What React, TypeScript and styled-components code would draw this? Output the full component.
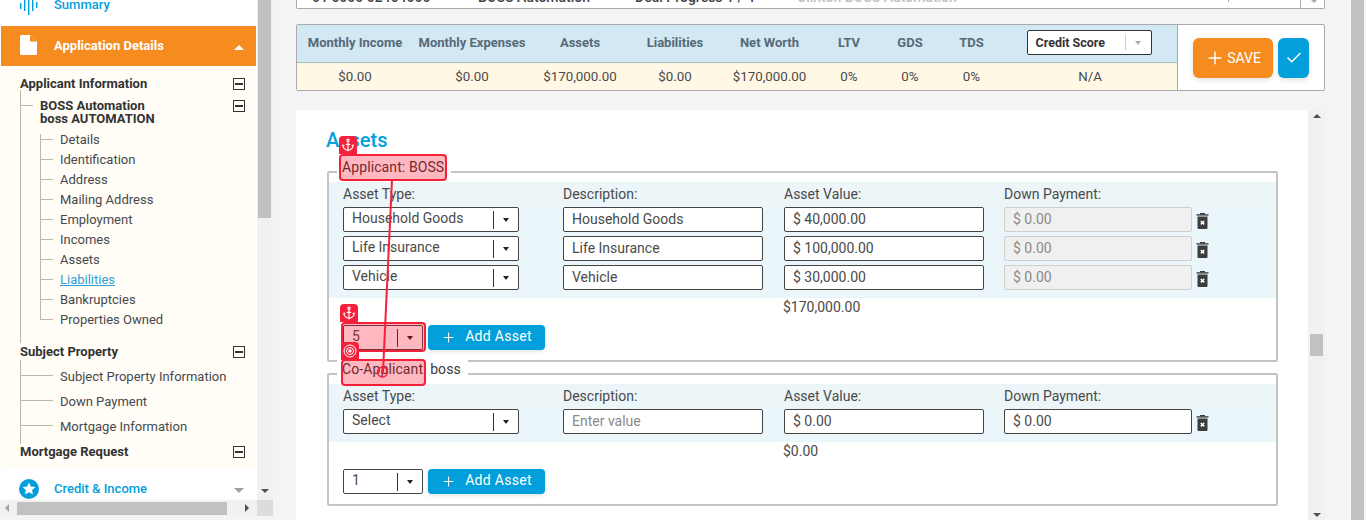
import React from 'react'
import styled, { createGlobalStyle } from 'styled-components'
import { Anchor, Check, Plus } from 'lucide-react'

const BLUE = '#029fdb'
const ORANGE = '#f68c1f'
const RED = '#f5213a'
const TEXT = '#3f3f3f'

const Global = createGlobalStyle`
  html, body { margin: 0; padding: 0; background: #f4f4f4; }
  body { font-family: Roboto, "Liberation Sans", sans-serif; color: ${TEXT}; }
  * { box-sizing: border-box; }
`

const Page = styled.div`
  position: relative;
  display: flex;
  width: 1366px;
  height: 520px;
  overflow: hidden;
  background: #f4f4f4;
`

/* ---------- sidebar ---------- */

const Side = styled.aside`
  width: 273px;
  flex: none;
  height: 516px;
  display: grid;
  grid-template-columns: 257px 16px;
  grid-template-rows: 500px 16px;
`

const SideBody = styled.div`
  background: #fff;
  padding-left: 1px;
  overflow: hidden;
`

const NavRow = styled.div<{ $active?: boolean }>`
  height: ${(p) => (p.$active ? 40 : 31)}px;
  width: 255px;
  display: flex;
  align-items: center;
  padding: ${(p) => (p.$active ? '0 0 2px 19px' : '7px 0 0 19px')};
  color: ${(p) => (p.$active ? '#fff' : BLUE)};
  background: ${(p) => (p.$active ? ORANGE : '#fff')};
  font-size: 13px;
  font-weight: ${(p) => (p.$active ? 700 : 500)};
`

const NavTop = styled(NavRow)`
  height: 25px;
  align-items: flex-start;
  padding: 0 0 0 19px;
  margin-bottom: 1px;
`

const NavIcon = styled.span`
  width: 34px;
  flex: none;
  display: flex;
  align-items: center;
`

const CreditIcon = styled(NavIcon)`
  width: 35px;
  margin-left: -1px;
  padding-top: 2px;
`

const NavLabel = styled.span`
  flex: 1;
`

const SummaryLabel = styled(NavLabel)`
  margin-top: -3px;
  line-height: 15px;
`

const Caret = styled.span<{ $up?: boolean; $color: string }>`
  width: 0;
  height: 0;
  margin: 5px 12px 0 0;
  border-left: 5px solid transparent;
  border-right: 5px solid transparent;
  border-${(p) => (p.$up ? 'bottom' : 'top')}: 5px solid ${(p) => p.$color};
`

const Tree = styled.div`
  position: relative;
  width: 255px;
  height: 402px;
  margin-top: 1px;
  background: #fffdf6;
`

const TreeText = styled.div<{ $x: number; $y: number; $bold?: boolean; $link?: boolean }>`
  position: absolute;
  left: ${(p) => p.$x}px;
  top: ${(p) => p.$y}px;
  font-size: 13px;
  line-height: 13px;
  white-space: nowrap;
  font-weight: ${(p) => (p.$bold ? 700 : 400)};
  color: ${(p) => (p.$link ? '#2f9fd8' : p.$bold ? '#333' : '#47494d')};
  text-decoration: ${(p) => (p.$link ? 'underline' : 'none')};
`

const TreeLine = styled.div<{ $x: number; $y: number; $w?: number; $h?: number }>`
  position: absolute;
  left: ${(p) => p.$x}px;
  top: ${(p) => p.$y}px;
  width: ${(p) => p.$w ?? 1}px;
  height: ${(p) => p.$h ?? 1}px;
  background: #bdb6a6;
`

const Minus = styled.div<{ $y: number }>`
  position: absolute;
  left: 232px;
  top: ${(p) => p.$y}px;
  width: 12px;
  height: 12px;
  border: 1px solid #333;
  &::after {
    content: '';
    position: absolute;
    left: 1px;
    right: 1px;
    top: 4px;
    height: 2px;
    background: #333;
  }
`

const VBar = styled.div`
  display: flex;
  flex-direction: column;
  background: #f1f1f1;
  padding: 0 2px 0 1px;
  align-items: center;
`

const VThumb = styled.div<{ $h: number }>`
  width: 13px;
  height: ${(p) => p.$h}px;
  flex: none;
  background: #c1c1c1;
`

const Spacer = styled.div`
  flex: 1;
`

const ArrowDown = styled.span`
  width: 0;
  height: 0;
  margin-bottom: 7px;
  border-left: 4px solid transparent;
  border-right: 4px solid transparent;
  border-top: 4px solid #505050;
`

const ArrowUp = styled.span`
  width: 0;
  height: 0;
  margin-top: 4px;
  border-left: 4px solid transparent;
  border-right: 4px solid transparent;
  border-bottom: 4px solid #505050;
`

const HBar = styled.div`
  display: flex;
  align-items: center;
  background: #f1f1f1;
  margin-left: 1px;
  height: 16px;
`

const HThumb = styled.div`
  width: 210px;
  height: 13px;
  background: #c1c1c1;
  margin-right: 4px;
`

const ArrowSide = styled.span<{ $right?: boolean; $dim?: boolean }>`
  width: 0;
  height: 0;
  margin: 0 ${(p) => (p.$right ? 0 : 8)}px 0 ${(p) => (p.$right ? 14 : 4)}px;
  border-top: 4px solid transparent;
  border-bottom: 4px solid transparent;
  border-${(p) => (p.$right ? 'left' : 'right')}: 4px solid ${(p) => (p.$dim ? '#a3a3a3' : '#505050')};
`

const Corner = styled.div`
  background: #dcdcdc;
`

/* ---------- main column ---------- */

const Main = styled.main`
  flex: none;
  width: 1029px;
  margin-left: 23px;
  display: flex;
  flex-direction: column;
`

const PageBar = styled.div`
  flex: none;
  width: 13px;
  margin-left: 26px;
  background: #c1c1c1;
`

const TopCard = styled.div`
  height: 9px;
  background: #fff;
  border: 1px solid #aaa;
  border-top: none;
  border-radius: 0 0 2px 2px;
  overflow: hidden;
`

const TopRow = styled.div`
  display: grid;
  grid-template-columns: 166px 157px 162px 431px 72px 1fr;
  height: 8px;
  padding-left: 15px;
`

const TopText = styled.div<{ $muted?: boolean }>`
  margin-top: -11px;
  font-size: 14px;
  line-height: 16px;
  font-weight: 500;
  white-space: nowrap;
  color: ${(p) => (p.$muted ? '#c0c0c0' : '#444')};
`

const TopTick = styled.div`
  border-left: 1px solid #aaa;
  height: 2px;
`

const TopDivider = styled.div`
  border-left: 1px solid #aaa;
  display: flex;
  padding-left: 10px;
  &::after {
    content: '';
    height: 0;
    border-left: 3px solid transparent;
    border-right: 3px solid transparent;
    border-top: 3px solid #aaa;
  }
`

const Summary = styled.section`
  margin-top: 15px;
  height: 67px;
  display: flex;
  border: 1px solid #aaa;
  border-radius: 2px;
  background: #fff;
`

const Figures = styled.div`
  width: 881px;
  flex: none;
  display: grid;
  grid-template-columns: 116px 118px 98px 92px 97px 62px 60px 63px 174px;
  grid-template-rows: 38px 27px;
  border-right: 1px solid #aaa;
`

const HeadCell = styled.div`
  background: #d2e8f2;
  border-bottom: 1px solid #a9bcc6;
  padding-bottom: 2px;
  display: flex;
  align-items: center;
  justify-content: center;
  font-size: 13px;
  font-weight: 700;
  color: #566a7a;
  white-space: nowrap;
`

const ValueCell = styled.div`
  background: #fff8e5;
  display: flex;
  align-items: center;
  justify-content: center;
  font-size: 13.33px;
  color: #4a4a4a;
`

const ScoreSelect = styled.div`
  width: 125px;
  height: 25px;
  margin-right: 2px;
  background: #fff;
  border: 1px solid #333;
  border-radius: 2px;
  display: flex;
  align-items: center;
  padding-left: 8px;
  font-size: 12.5px;
  font-weight: 700;
  color: #333;
`

const ScoreArrow = styled.span`
  margin-left: auto;
  width: 26px;
  height: 15px;
  border-left: 1px solid #ccc;
  display: flex;
  align-items: center;
  justify-content: center;
  &::after {
    content: '';
    border-left: 3.5px solid transparent;
    border-right: 3.5px solid transparent;
    border-top: 4px solid #aaa;
  }
`

const Actions = styled.div`
  flex: 1;
  display: flex;
  align-items: center;
  gap: 5px;
  padding-left: 15px;
`

const SaveBtn = styled.button`
  width: 80px;
  height: 40px;
  padding: 0;
  border: none;
  border-radius: 6px;
  background: ${ORANGE};
  color: #fff;
  font: 400 14px Roboto, sans-serif;
  display: flex;
  align-items: center;
  justify-content: center;
  gap: 2px;
  box-shadow: 0 2px 5px rgba(0, 0, 0, 0.12);
`

const CheckBtn = styled(SaveBtn)`
  width: 31px;
  background: ${BLUE};
`

const Content = styled.div`
  margin-top: 19px;
  display: flex;
  height: 410px;
`

const Panel = styled.div`
  width: 1012px;
  flex: none;
  background: #fff;
  border-radius: 2px 0 0 0;
  padding: 18px 31px 0;
  overflow: hidden;
`

const InnerBar = styled(VBar)`
  flex: 1;
  padding: 0 2px;
`

const InnerThumb = styled(VThumb)`
  margin-top: 216px;
`

const InnerDown = styled(ArrowDown)`
  margin-bottom: 3px;
`

const Title = styled.h2`
  margin: 0 0 0 -1px;
  height: 24px;
  font-size: 20px;
  line-height: 24px;
  font-weight: 500;
  color: ${BLUE};
`

const Field = styled.fieldset<{ $h: number }>`
  position: relative;
  width: 951px;
  height: ${(p) => p.$h}px;
  margin: 19px 0 0;
  padding: 9px 0 0;
  border: 2px solid #c4c4c4;
  border-radius: 2px;
`

const FieldSecond = styled(Field)`
  margin-top: 11px;
`

const Legend = styled.div`
  position: absolute;
  left: 8px;
  top: -15px;
  padding: 0 7px 0 5px;
  height: 18px;
  line-height: 18px;
  background: #fff;
  font-size: 14px;
  letter-spacing: 0.1px;
  color: #3a3a3a;
`

const Labels = styled.div`
  display: grid;
  grid-template-columns: 220px 221px 220px 1fr;
  height: 24px;
  padding: 3px 0 0 14px;
  background: #ecf5f8;
  font-size: 14px;
  line-height: 18px;
  color: #4a4a4a;
`

const Rows = styled.div`
  display: flex;
  flex-direction: column;
  gap: 4px;
  padding: 1px 0 8px 14px;
  background: #ebf6fb;
`

const Row = styled.div`
  display: flex;
  align-items: center;
  height: 25px;
`

const SelectBox = styled.div<{ $w: number }>`
  width: ${(p) => p.$w}px;
  height: 25px;
  flex: none;
  background: #fff;
  border: 1px solid #444;
  border-radius: 2px;
  display: flex;
  align-items: flex-start;
  padding: 2px 0 0 8px;
  font-size: 14px;
  line-height: 17px;
  color: #4a4a4a;
`

const SelectArrow = styled.span`
  margin-left: auto;
  margin-top: 1px;
  width: 25px;
  height: 18px;
  border-left: 1px solid #333;
  display: flex;
  align-items: center;
  justify-content: center;
  &::after {
    content: '';
    border-left: 3px solid transparent;
    border-right: 3px solid transparent;
    border-top: 4px solid #222;
  }
`

const Input = styled.div<{ $w: number; $off?: boolean; $hint?: boolean }>`
  width: ${(p) => p.$w}px;
  height: 25px;
  flex: none;
  margin-left: 44px;
  border: 1px solid ${(p) => (p.$off ? '#cfcfcf' : '#444')};
  background: ${(p) => (p.$off ? '#f0f0f0' : '#fff')};
  border-radius: 2px;
  padding-left: 8px;
  font-size: 14px;
  line-height: 23px;
  color: ${(p) => (p.$off || p.$hint ? '#8a8a8a' : '#4a4a4a')};
`

const AmountInput = styled(Input)`
  margin-left: 21px;
`

const DownInput = styled(Input)`
  margin-left: 20px;
`

const TrashIcon = styled.svg`
  width: 13px;
  height: 16px;
  margin: 3px 0 0 4px;
  flex: none;
`

const Total = styled.div`
  height: 18px;
  padding-left: 454px;
  font-size: 14px;
  line-height: 18px;
  color: #4a4a4a;
`

const Footer = styled.div`
  display: flex;
  gap: 5px;
  margin-top: 9px;
  padding-left: 14px;
  height: 25px;
`

const AddBtn = styled.button`
  width: 117px;
  height: 25px;
  padding: 0 0 3px;
  border: none;
  border-radius: 4px;
  background: ${BLUE};
  color: #fff;
  font: 400 14px Roboto, sans-serif;
  letter-spacing: 0.3px;
  display: flex;
  align-items: center;
  justify-content: center;
  gap: 9px;
  box-shadow: 0 1px 4px rgba(0, 0, 0, 0.15);
  svg {
    margin-top: 3px;
  }
`

/* ---------- inspector overlay drawn over the page ---------- */

const Tag = styled.div<{ $x: number; $y: number }>`
  position: absolute;
  left: ${(p) => p.$x}px;
  top: ${(p) => p.$y}px;
  width: 18px;
  height: 18px;
  background: ${RED};
  color: #fff;
  border-radius: 4px 4px 0 0;
  display: flex;
  align-items: center;
  justify-content: center;
`

const Box = styled.div<{ $x: number; $y: number; $w: number; $h: number }>`
  position: absolute;
  left: ${(p) => p.$x}px;
  top: ${(p) => p.$y}px;
  width: ${(p) => p.$w}px;
  height: ${(p) => p.$h}px;
  border: 2px solid ${RED};
  border-radius: 4px;
  background: rgba(255, 0, 24, 0.28);
`

const Wire = styled.svg`
  position: absolute;
  left: 0;
  top: 0;
  width: 1366px;
  height: 520px;
  pointer-events: none;
`

const Trash = () => (
  <TrashIcon viewBox="0 0 13 16">
    <rect x="0.500" y="1.200" width="12" height="1.400" fill="#3c3c3c" />
    <rect x="4" y="0" width="5" height="1.400" fill="#3c3c3c" />
    <path d="M1.500 3.500h10v11.500a1 1 0 0 1-1 1h-8a1 1 0 0 1-1-1z" fill="#3c3c3c" />
    <path d="M4.800 8l3.400 3.400M8.200 8l-3.400 3.400" stroke="#fff" strokeWidth="1.500" />
  </TrashIcon>
)

const COLS = [
  ['Monthly Income', '$0.00'],
  ['Monthly Expenses', '$0.00'],
  ['Assets', '$170,000.00'],
  ['Liabilities', '$0.00'],
  ['Net Worth', '$170,000.00'],
  ['LTV', '0%'],
  ['GDS', '0%'],
  ['TDS', '0%'],
]

const LABELS = ['Asset Type:', 'Description:', 'Asset Value:', 'Down Payment:']

const APPLICANT_ROWS = [
  ['Household Goods', '$ 40,000.00'],
  ['Life Insurance', '$ 100,000.00'],
  ['Vehicle', '$ 30,000.00'],
]

const TREE_LEAVES = ['Details', 'Identification', 'Address', 'Mailing Address', 'Employment', 'Incomes', 'Assets', 'Liabilities', 'Bankruptcies', 'Properties Owned']
const PROPERTY_LEAVES = ['Subject Property Information', 'Down Payment', 'Mortgage Information']

const FieldLabels = () => (
  <Labels>
    {LABELS.map((l) => (
      <span key={l}>{l}</span>
    ))}
  </Labels>
)

const AddRow: React.FC<{ count: string }> = ({ count }) => (
  <Footer>
    <SelectBox $w={80}>
      {count}
      <SelectArrow />
    </SelectBox>
    <AddBtn>
      <Plus size={15} strokeWidth={1.75} />
      Add Asset
    </AddBtn>
  </Footer>
)

export default function App() {
  return (
    <Page>
      <Global />
      <Side>
        <SideBody>
          <NavTop>
            <NavIcon>
              <svg width="18" height="15" viewBox="0 0 18 15" fill={BLUE}>
                <rect x="0" y="3" width="1.400" height="6" />
                <rect x="4" y="0" width="1.400" height="11" />
                <rect x="8" y="0" width="1.400" height="15" />
                <rect x="12" y="0" width="1.400" height="11" />
                <rect x="16" y="2" width="1.400" height="6" />
              </svg>
            </NavIcon>
            <SummaryLabel>Summary</SummaryLabel>
          </NavTop>
          <NavRow $active>
            <NavIcon>
              <svg width="17" height="20" viewBox="0 0 17 20">
                <path d="M1.500 0H10l7 6.500V18.500a1.500 1.500 0 0 1-1.500 1.500h-14A1.500 1.500 0 0 1 0 18.500v-17A1.500 1.500 0 0 1 1.500 0z" fill="#fff" />
                <path d="M10 0v6.500h7z" fill={ORANGE} />
              </svg>
            </NavIcon>
            <NavLabel>Application Details</NavLabel>
            <Caret $up $color="#fff" />
          </NavRow>
          <Tree>
            <TreeText $x={19} $y={10} $bold>Applicant Information</TreeText>
            <Minus $y={11} />
            <TreeLine $x={19} $y={23} $h={253} />
            <TreeLine $x={20} $y={38} $w={12} />
            <TreeText $x={39} $y={32} $bold>BOSS Automation</TreeText>
            <TreeText $x={39} $y={45} $bold>boss AUTOMATION</TreeText>
            <Minus $y={33} />
            <TreeLine $x={39} $y={67} $h={186} />
            {TREE_LEAVES.map((t, i) => (
              <React.Fragment key={t}>
                <TreeLine $x={40} $y={72 + i * 20} $w={12} />
                <TreeText $x={59} $y={66 + i * 20} $link={t === 'Liabilities'}>{t}</TreeText>
              </React.Fragment>
            ))}
            <TreeText $x={19} $y={278} $bold>Subject Property</TreeText>
            <Minus $y={279} />
            <TreeLine $x={19} $y={293} $h={84} />
            {PROPERTY_LEAVES.map((t, i) => (
              <React.Fragment key={t}>
                <TreeLine $x={20} $y={308 + i * 25} $w={32} />
                <TreeText $x={59} $y={303 + i * 25}>{t}</TreeText>
              </React.Fragment>
            ))}
            <TreeText $x={19} $y={378} $bold>Mortgage Request</TreeText>
            <Minus $y={379} />
          </Tree>
          <NavRow>
            <CreditIcon>
              <svg width="20" height="20" viewBox="0 0 20 20">
                <circle cx="10" cy="10" r="10" fill={BLUE} />
                <path d="M10 3.500l1.900 4.100 4.500.500-3.300 3 .9 4.400-4-2.300-4 2.300.9-4.400-3.300-3 4.500-.500z" fill="#fff" />
              </svg>
            </CreditIcon>
            <NavLabel>Credit &amp; Income</NavLabel>
            <Caret $color="#9aa0a6" />
          </NavRow>
        </SideBody>
        <VBar>
          <VThumb $h={218} />
          <Spacer />
          <ArrowDown />
        </VBar>
        <HBar>
          <ArrowSide $dim />
          <HThumb />
          <ArrowSide $right />
        </HBar>
        <Corner />
      </Side>

      <Main>
        <TopCard>
          <TopRow>
            <TopText>01 0000 02464000</TopText>
            <TopText>BOSS Automation</TopText>
            <TopText>Deal Progress 1 / 4</TopText>
            <TopText $muted>Clinton BOSS Automation</TopText>
            <TopTick />
            <TopDivider />
          </TopRow>
        </TopCard>

        <Summary>
          <Figures>
            {COLS.map(([h]) => (
              <HeadCell key={h}>{h}</HeadCell>
            ))}
            <HeadCell>
              <ScoreSelect>
                Credit Score
                <ScoreArrow />
              </ScoreSelect>
            </HeadCell>
            {COLS.map(([h, v]) => (
              <ValueCell key={h}>{v}</ValueCell>
            ))}
            <ValueCell>N/A</ValueCell>
          </Figures>
          <Actions>
            <SaveBtn>
              <Plus size={20} strokeWidth={1.75} />
              SAVE
            </SaveBtn>
            <CheckBtn>
              <Check size={18} strokeWidth={2} />
            </CheckBtn>
          </Actions>
        </Summary>

        <Content>
          <Panel>
            <Title>Assets</Title>
            <Field $h={191}>
              <Legend>Applicant: BOSS</Legend>
              <FieldLabels />
              <Rows>
                {APPLICANT_ROWS.map(([name, value]) => (
                  <Row key={name}>
                    <SelectBox $w={176}>
                      {name}
                      <SelectArrow />
                    </SelectBox>
                    <Input $w={200}>{name}</Input>
                    <AmountInput $w={200}>{value}</AmountInput>
                    <DownInput $w={188} $off>$ 0.00</DownInput>
                    <Trash />
                  </Row>
                ))}
              </Rows>
              <Total>$170,000.00</Total>
              <AddRow count="5" />
            </Field>
            <FieldSecond $h={133}>
              <Legend>Co-Applicant: boss</Legend>
              <FieldLabels />
              <Rows>
                <Row>
                  <SelectBox $w={176}>
                    Select
                    <SelectArrow />
                  </SelectBox>
                  <Input $w={200} $hint>Enter value</Input>
                  <AmountInput $w={200}>$ 0.00</AmountInput>
                  <DownInput $w={188}>$ 0.00</DownInput>
                  <Trash />
                </Row>
              </Rows>
              <Total>$0.00</Total>
              <AddRow count="1" />
            </FieldSecond>
          </Panel>
          <InnerBar>
            <ArrowUp />
            <InnerThumb $h={22} />
            <Spacer />
            <InnerDown />
          </InnerBar>
        </Content>
      </Main>
      <PageBar />

      <Box $x={339} $y={154} $w={108} $h={27} />
      <Tag $x={339} $y={136}><Anchor size={14} strokeWidth={2} /></Tag>
      <Box $x={341} $y={322} $w={85} $h={30} />
      <Tag $x={340} $y={304}><Anchor size={14} strokeWidth={2} /></Tag>
      <Box $x={341} $y={359} $w={85} $h={27} />
      <Tag $x={341} $y={342}>
        <svg width="14" height="14" viewBox="0 0 14 14" fill="none" stroke="#fff">
          <circle cx="7" cy="7" r="6" />
          <circle cx="7" cy="7" r="3.500" />
          <circle cx="7" cy="7" r="1.200" fill="#fff" />
        </svg>
      </Tag>
      <Wire viewBox="0 0 1366 520">
        <path d="M392 180L383 372" stroke={RED} strokeWidth="2" fill="none" />
        <circle cx="382.500" cy="372" r="5" stroke={RED} strokeWidth="1.500" fill="none" />
        <circle cx="382.500" cy="372" r="1.500" fill={RED} />
      </Wire>
    </Page>
  )
}
